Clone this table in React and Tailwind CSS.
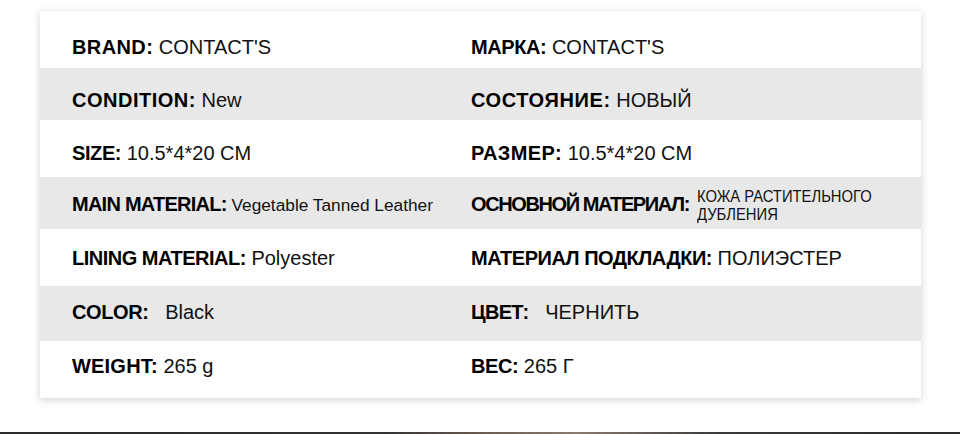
import React from "react";

const rows = [
  { h: 57, pt: 26, bg: "bg-white", l: ["BRAND:", " CONTACT'S", "tracking-[0.4px]"], r: ["МАРКА:", " CONTACT'S", "tracking-[-0.4px]"] },
  { h: 52, pt: 22, bg: "bg-[#e8e8e8]", l: ["CONDITION:", " New", "tracking-[0.5px]"], r: ["СОСТОЯНИЕ:", " НОВЫЙ", "tracking-[0.6px]"] },
  { h: 57, pt: 23, bg: "bg-white", l: ["SIZE:", " 10.5*4*20 CM", "tracking-[-0.4px]"], r: ["РАЗМЕР:", " 10.5*4*20 CM", "tracking-[0.4px]"] },
  { h: 52, pt: 0, bg: "bg-[#e8e8e8]", main: true },
  { h: 57, pt: 19, bg: "bg-white", l: ["LINING MATERIAL:", " Polyester", "tracking-[-0.5px]"], r: ["МАТЕРИАЛ ПОДКЛАДКИ:", " ПОЛИЭСТЕР", "tracking-[-0.5px]"] },
  { h: 55, pt: 16, bg: "bg-[#e8e8e8]", l: ["COLOR:", "\u00a0\u00a0 Black", "tracking-[-0.4px]"], r: ["ЦВЕТ:", "\u00a0\u00a0 ЧЕРНИТЬ", "tracking-[-0.7px]"] },
  { h: 57, pt: 15, bg: "bg-white", l: ["WEIGHT:", " 265 g", "tracking-[0.2px]"], r: ["ВЕС:", " 265 Г", "tracking-[-0.4px]"] },
];

function Cell({ pair }) {
  return (
    <div className="pl-[32px] whitespace-pre text-[20px] leading-[20px] text-[#111]">
      <span className={`font-bold text-black ${pair[2]}`}>{pair[0]}</span>
      <span>{pair[1]}</span>
    </div>
  );
}

export default function App() {
  return (
    <div className="w-[960px] h-[434px] bg-white relative overflow-hidden font-['Liberation_Sans',Arial,sans-serif]">
      <div className="pt-[11px] pl-[40px]">
        <div className="w-[881px] bg-white shadow-[0_2px_8px_rgba(0,0,0,0.18)]">
          {rows.map((row, i) => (
            <div key={i} className={`${row.bg} grid grid-cols-[399px_1fr]`} style={{ height: row.h, paddingTop: row.pt }}>
              {row.main ? (
                <>
                  <div className="pl-[32px] pt-[17px] whitespace-pre leading-[20px] text-[#111]">
                    <span className="font-bold text-black text-[20px] tracking-[-0.75px]">MAIN MATERIAL:</span>
                    <span className="text-[17.3px]"> Vegetable Tanned Leather</span>
                  </div>
                  <div className="pl-[32px] flex items-center h-[52px] mt-[1px]">
                    <span className="font-bold text-black text-[20px] leading-[20px] tracking-[-1.4px] whitespace-pre">ОСНОВНОЙ МАТЕРИАЛ:</span>
                    <div className="ml-[8px] mt-[3px] text-[17px] leading-[18px] text-[#111] origin-left scale-x-[0.87] whitespace-pre">
                      <div>КОЖА РАСТИТЕЛЬНОГО</div>
                      <div>ДУБЛЕНИЯ</div>
                    </div>
                  </div>
                </>
              ) : (
                <>
                  <Cell pair={row.l} />
                  <Cell pair={row.r} />
                </>
              )}
            </div>
          ))}
        </div>
      </div>
      <div className="absolute left-0 right-0 bottom-0 h-[2px] bg-[linear-gradient(90deg,#2a2a2a_0%,#333_40%,#6b5a4e_50%,#8a7a6e_60%,#3a3a3a_75%,#2a2a2a_100%)]" />
    </div>
  );
}
